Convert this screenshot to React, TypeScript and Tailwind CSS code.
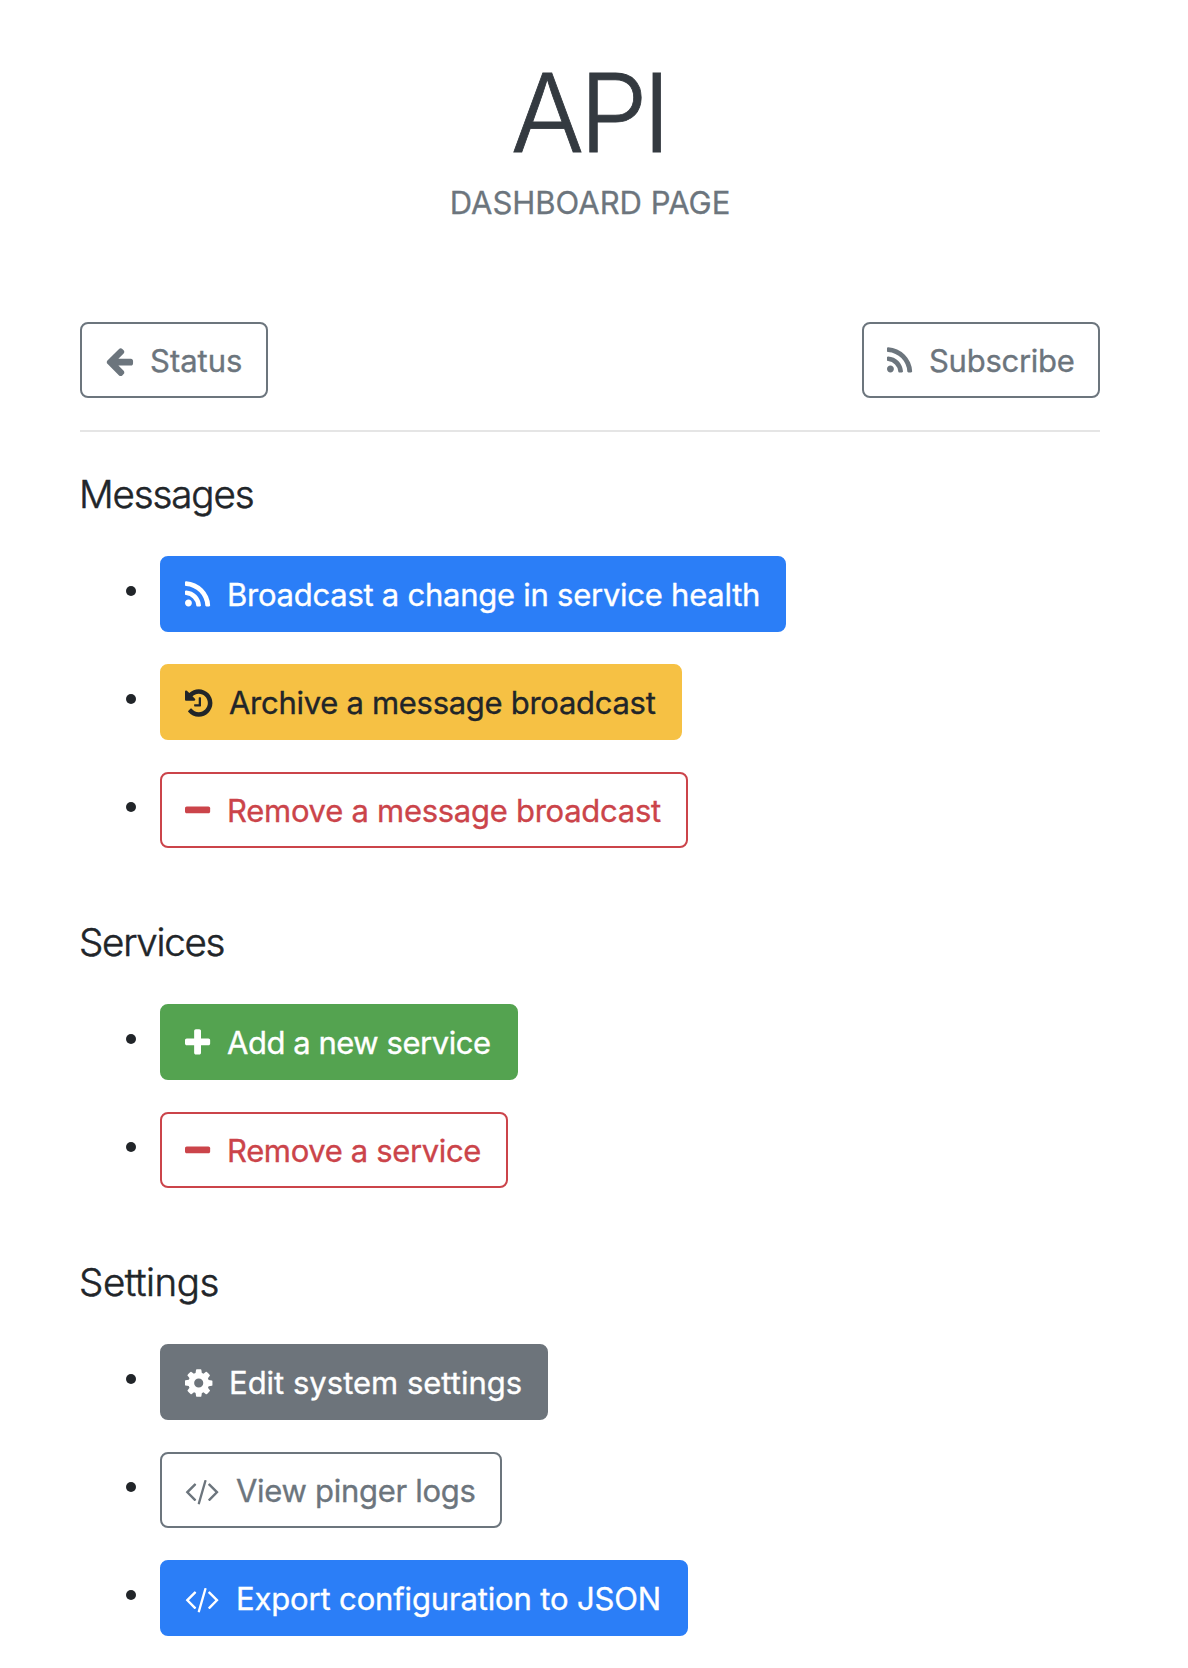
import type { ReactNode } from "react";

const icons = {
  arrowLeft: {
    box: "93 0 1568 1792",
    width: "w-[28px]",
    path: "M1664 896v128q0 53-32.5 90.5t-84.5 37.5h-704l293 294q38 36 38 90t-38 90l-75 76q-37 37-90 37-52 0-91-37l-651-652q-37-37-37-90 0-52 37-91l651-650q38-38 91-38 52 0 90 38l75 74q38 38 38 91t-38 91l-293 293h704q52 0 84.5 37.5t32.5 90.5z",
  },
  rss: {
    box: "192 0 1400 1792",
    width: "w-[25px]",
    path: "M576 1344q0 80-56 136t-136 56-136-56-56-136 56-136 136-56 136 56 56 136zm512 123q2 28-17 48-18 21-47 21h-135q-25 0-43-16.5t-20-41.5q-22-229-184.5-391.5t-391.5-184.5q-25-2-41.5-20t-16.5-43v-135q0-29 21-47 17-17 43-17h5q160 13 306 80.5t259 181.5q114 113 181.5 259t80.5 306zm512 2q2 27-18 47-18 20-46 20h-143q-26 0-44.5-17.5t-19.5-42.5q-12-215-101-408.5t-231.5-336-336-231.5-408.5-102q-25-1-42.5-19.5t-17.5-43.5v-143q0-28 20-46 18-18 44-18h3q262 13 501.5 120t425.5 294q187 186 294 425.5t120 501.5z",
  },
  history: {
    box: "128 0 1512 1792",
    width: "w-[27px]",
    path: "M1664 896q0 156-61 298t-164 245-245 164-298 61q-172 0-327-72.5t-264-204.5q-7-10-6.5-22.5t8.5-20.5l137-138q10-9 25-9 16 2 23 12 73 95 179 147t225 52q104 0 198.5-40.5t163.5-109.5 109.5-163.5 40.5-198.5-40.5-198.5-109.5-163.5-163.5-109.5-198.5-40.5q-98 0-188 35.5t-160 101.5l137 138q31 30 14 69-17 40-59 40h-448q-26 0-45-19t-19-45v-448q0-42 40-59 39-17 69 14l130 129q107-101 244.5-156.5t284.5-55.5q156 0 298 61t245 164 164 245 61 298zm-640-288v448q0 14-9 23t-23 9h-320q-14 0-23-9t-9-23v-64q0-14 9-23t23-9h224v-352q0-14 9-23t23-9h64q14 0 23 9t9 23z",
  },
  minus: {
    box: "192 0 1400 1792",
    width: "w-[25px]",
    path: "M1600 736v192q0 40-28 68t-68 28h-1216q-40 0-68-28t-28-68v-192q0-40 28-68t68-28h1216q40 0 68 28t28 68z",
  },
  plus: {
    box: "192 0 1400 1792",
    width: "w-[25px]",
    path: "M1600 736v192q0 40-28 68t-68 28h-416v416q0 40-28 68t-68 28h-192q-40 0-68-28t-28-68v-416h-416q-40 0-68-28t-28-68v-192q0-40 28-68t68-28h416v-416q0-40 28-68t68-28h192q40 0 68 28t28 68v416h416q40 0 68 28t28 68z",
  },
  cog: {
    box: "128 0 1512 1792",
    width: "w-[27px]",
    path: "M1152 896q0-106-75-181t-181-75-181 75-75 181 75 181 181 75 181-75 75-181zm512-109v222q0 12-8 23t-20 13l-185 28q-19 54-39 91 35 50 107 138 10 12 10 25t-9 23q-27 37-99 108t-94 71q-12 0-26-9l-138-108q-44 23-91 38-16 136-29 186-7 28-36 28h-222q-14 0-24.5-8.5t-11.5-21.5l-28-184q-49-16-90-37l-141 107q-10 9-25 9-14 0-25-11-126-114-165-168-7-10-7-23 0-12 8-23 15-21 51-66.5t54-70.5q-27-50-41-99l-183-27q-13-2-21-12.5t-8-23.5v-222q0-12 8-23t19-13l186-28q14-46 39-92-40-57-107-138-10-12-10-24 0-10 9-23 26-36 98.5-107.5t94.5-71.5q13 0 26 10l138 107q44-23 91-38 16-136 29-186 7-28 36-28h222q14 0 24.5 8.5t11.5 21.5l28 184q49 16 90 37l142-107q9-9 24-9 13 0 25 10 129 119 165 170 7 8 7 22 0 12-8 23-15 21-51 66.5t-54 70.5q26 50 41 98l183 28q13 2 21 12.5t8 23.5z",
  },
  code: {
    box: "0 0 1904 1792",
    width: "w-[34px]",
    path: "M617 1399l-50 50q-10 10-23 10t-23-10l-466-466q-10-10-10-23t10-23l466-466q10-10 23-10t23 10l50 50q10 10 10 23t-10 23l-393 393 393 393q10 10 10 23t-10 23zm591-1067l-373 1291q-4 13-15.5 19.5t-23.5 2.5l-62-17q-13-4-19.5-15.5t-2.5-24.5l373-1291q4-13 15.5-19.5t23.5-2.5l62 17q13 4 19.5 15.5t2.5 24.5zm657 651l-466 466q-10 10-23 10t-23-10l-50-50q-10-10-10-23t10-23l393-393-393-393q-10-10-10-23t10-23l50-50q10-10 23-10t23 10l466 466q10 10 10 23t-10 23z",
  },
};

const variants = {
  outlineSecondary: "border-[#6c757d] text-[#6c757d]",
  primary: "border-[#2b7ef7] bg-[#2b7ef7] text-white",
  warning: "border-[#f6c144] bg-[#f6c144] text-[#212529]",
  outlineDanger: "border-[#cb444a] text-[#cb444a]",
  success: "border-[#54a350] bg-[#54a350] text-white",
  secondary: "border-[#6d747b] bg-[#6d747b] text-white",
};

type ButtonProps = {
  icon: keyof typeof icons;
  variant: keyof typeof variants;
  size: string;
  label: string;
};

function Button({ icon, variant, size, label }: ButtonProps) {
  const { box, width, path } = icons[icon];
  return (
    <a
      className={`flex h-[76px] items-center rounded-lg border-2 pl-[23px] text-[31px] leading-[48px] whitespace-nowrap ${variants[variant]} ${size}`}
    >
      <svg viewBox={box} className={`mt-px h-8 shrink-0 overflow-visible fill-current ${width}`}>
        <path d={path} />
      </svg>
      <span className="ml-[17px] pt-px [-webkit-text-stroke:0.35px]">{label}</span>
    </a>
  );
}

function Section({ title, tracking, items }: { title: string; tracking: string; items: ButtonProps[] }) {
  return (
    <section>
      <h2 className={`-ml-px h-12 text-[38.5px] leading-[48px] font-light [-webkit-text-stroke:0.55px] ${tracking}`}>
        {title}
      </h2>
      <ul className="mt-[38px] flex flex-col gap-8">
        {items.map((item) => (
          <Item key={item.label}>
            <Button {...item} />
          </Item>
        ))}
      </ul>
    </section>
  );
}

function Item({ children }: { children: ReactNode }) {
  return (
    <li className="flex items-center pl-[46px]">
      <span className="mr-6 mb-[7px] size-[10px] rounded-full bg-[#212529]" />
      {children}
    </li>
  );
}

export default function App() {
  return (
    <main className="h-[1668px] overflow-hidden bg-white pr-[88px] pl-20 font-['Inter',sans-serif] text-[#212529]">
      <header className="flex flex-col items-center pt-[45px]">
        <h1 className="h-[134px] pr-[3px] text-[109px] leading-[134px] font-light tracking-[-5px] text-[#343a40] [-webkit-text-stroke:0.8px]">
          API
        </h1>
        <p className="text-[31px] leading-[48px] text-[#6c757d] [-webkit-text-stroke:0.3px]">DASHBOARD PAGE</p>
      </header>
      <nav className="mt-[95px] flex justify-between border-b-2 border-[#e5e5e5] pb-8">
        <Button icon="arrowLeft" variant="outlineSecondary" size="w-[188px]" label="Status" />
        <Button icon="rss" variant="outlineSecondary" size="w-[238px] tracking-[-0.27px]" label="Subscribe" />
      </nav>
      <div className="flex flex-col gap-[70px] pt-[38px]">
        <Section
          title="Messages"
          tracking="tracking-[-1.1px]"
          items={[
            { icon: "rss", variant: "primary", size: "w-[626px] tracking-[-0.25px]", label: "Broadcast a change in service health" },
            { icon: "history", variant: "warning", size: "w-[522px] tracking-[-0.29px]", label: "Archive a message broadcast" },
            { icon: "minus", variant: "outlineDanger", size: "w-[528px] tracking-[-0.272px]", label: "Remove a message broadcast" },
          ]}
        />
        <Section
          title="Services"
          tracking="tracking-[-1.25px]"
          items={[
            { icon: "plus", variant: "success", size: "w-[358px] tracking-[-0.46px]", label: "Add a new service" },
            { icon: "minus", variant: "outlineDanger", size: "w-[348px] tracking-[-0.358px]", label: "Remove a service" },
          ]}
        />
        <Section
          title="Settings"
          tracking="tracking-[-0.45px]"
          items={[
            { icon: "cog", variant: "secondary", size: "w-[388px]", label: "Edit system settings" },
            { icon: "code", variant: "outlineSecondary", size: "w-[342px] tracking-[-0.286px]", label: "View pinger logs" },
            { icon: "code", variant: "primary", size: "w-[528px] tracking-[-0.15px]", label: "Export configuration to JSON" },
          ]}
        />
      </div>
    </main>
  );
}
